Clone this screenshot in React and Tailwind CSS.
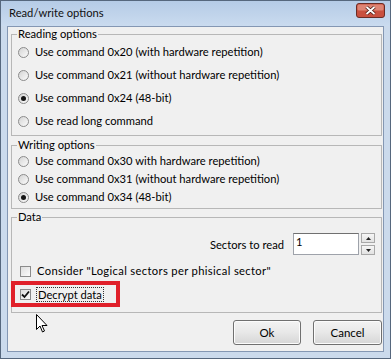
import React from "react";

function Radio({ checked }) {
  return (
    <span className="relative flex items-center justify-center w-[11px] h-[11px] rounded-full border border-[#8b8b8b] bg-linear-to-br from-[#d4d4d4] to-[#fbfbfb] shrink-0">
      {checked && <span className="w-[5px] h-[5px] rounded-full bg-[#151515]" />}
    </span>
  );
}

function Checkbox({ checked }) {
  return (
    <span className="flex items-center justify-center w-[11px] h-[11px] border border-[#8b8b8b] bg-linear-to-br from-[#dedede] to-[#fbfbfb] shrink-0">
      {checked && (
        <svg width="9" height="9" viewBox="0 0 9 9">
          <path d="M1 4.5 L3.5 7 L8 1.5" fill="none" stroke="#111" strokeWidth="1.8" />
        </svg>
      )}
    </span>
  );
}

function Group({ label, className = "", children }) {
  return (
    <fieldset className={`border border-[#b7b7b7] min-w-0 ${className}`}>
      <legend className="ml-[5px] px-[1px] leading-[14px]">{label}</legend>
      {children}
    </fieldset>
  );
}

function Row({ h, checked, children }) {
  return (
    <div className={`flex items-center gap-[6px] pl-[6px] ${h}`}>
      <Radio checked={checked} />
      <span>{children}</span>
    </div>
  );
}

function Button({ children, w }) {
  return (
    <button className={`${w} h-[25px] rounded-[3px] border border-[#707070] bg-linear-to-b from-[#f3f3f3] via-[#e8e8e8] to-[#d6d6d6] shadow-[inset_0_0_0_1px_#fcfcfc] text-[11.5px]`}>
      {children}
    </button>
  );
}

function CloseIcon() {
  return (
    <svg width="29" height="15" viewBox="0 0 29 15" className="mt-[-7px] shrink-0">
      <rect x="0.5" y="0.5" width="28" height="14" rx="2.5" fill="#c9503f" stroke="#6b2c25" />
      <rect x="1.5" y="1.5" width="26" height="6" rx="1.5" fill="#dd8575" />
      <path d="M10.5 4 L18.5 11 M18.5 4 L10.5 11" stroke="#4a1a14" strokeWidth="3.4" />
      <path d="M10.5 4 L18.5 11 M18.5 4 L10.5 11" stroke="#fff" strokeWidth="1.8" />
    </svg>
  );
}

function Spinner() {
  return (
    <div className="w-[14px] h-[22px] flex flex-col justify-between">
      <div className="h-[10px] border border-[#a8a8a8] bg-linear-to-b from-[#f6f6f6] to-[#e2e2e2] flex items-center justify-center">
        <svg width="5" height="3" viewBox="0 0 5 3"><path d="M0 3 L2.5 0 L5 3Z" fill="#222" /></svg>
      </div>
      <div className="h-[10px] border border-[#a8a8a8] bg-linear-to-b from-[#f6f6f6] to-[#e2e2e2] flex items-center justify-center">
        <svg width="5" height="3" viewBox="0 0 5 3"><path d="M0 0 L2.5 3 L5 0Z" fill="#222" /></svg>
      </div>
    </div>
  );
}

export default function App() {
  return (
    <div className="relative w-[391px] h-[359px] flex flex-col bg-[#cbdaec] border border-[#56677d] font-['Lato',sans-serif] text-[11.2px] text-black">
      {/* title bar */}
      <div className="h-[25px] flex items-center justify-between pl-[8px] pr-[5px] bg-linear-to-b from-[#b5cbe6] to-[#cadbef]">
        <span className="text-[11.2px] text-[#111]">Read/write options</span>
        <CloseIcon />
      </div>

      {/* client area */}
      <div className="flex-1 mx-[6px] mb-[6px] bg-[#f0f0f0] border border-[#8497b3] pl-[3px] pr-[1px] flex flex-col">
        <Group label="Reading options">
          <div className="flex flex-col pb-[2px]">
            <Row h="h-[23px]">Use command 0x20 (with hardware repetition)</Row>
            <Row h="h-[23px]">Use command 0x21 (without hardware repetition)</Row>
            <Row h="h-[23px]" checked>Use command 0x24 (48-bit)</Row>
            <Row h="h-[23px]">Use read long command</Row>
          </div>
        </Group>

        <Group label="Writing options" className="mt-[2px]">
          <div className="flex flex-col pb-[2px]">
            <Row h="h-[18px]">Use command 0x30 with hardware repetition)</Row>
            <Row h="h-[18px]">Use command 0x31 (without hardware repetition)</Row>
            <Row h="h-[18px]" checked>Use command 0x34 (48-bit)</Row>
          </div>
        </Group>

        <Group label="Data" className="mt-[1px]">
          <div className="flex flex-col pb-[5px]">
            <div className="mt-[9px] h-[22px] grid grid-cols-[1fr_66px_14px] gap-x-[2px] items-center pr-[6px]">
              <span className="mt-[3px] text-right pr-[7px]">Sectors to read</span>
              <div className="h-[22px] bg-white border border-[#9ea2aa] border-t-[#707070] pl-[2px] leading-[16px]">1</div>
              <Spinner />
            </div>
            <div className="mt-[7px] h-[19px] flex items-center gap-[6px] pl-[8px]">
              <Checkbox />
              <span className="tracking-[0.35px]">Consider "Logical sectors per phisical sector"</span>
            </div>
            <div className="ml-[-1px] w-[109px] h-[26px] border-[4px] border-[#e0202a] flex items-center gap-[5px] pl-[5px]">
              <Checkbox checked />
              <span className="border border-dotted border-[#333] px-[1px] leading-[13px]">Decrypt data</span>
            </div>
          </div>
        </Group>

        <div className="mt-[7px] flex justify-end gap-[12px]">
          <Button w="w-[68px]">Ok</Button>
          <Button w="w-[69px]">Cancel</Button>
        </div>
      </div>

      {/* mouse cursor */}
      <svg className="absolute left-[35px] top-[313px]" width="13" height="19" viewBox="0 0 13 19">
        <path d="M0.5 0.5 L0.5 15.5 L4 12 L6.5 18 L8.5 17 L6 11.5 L11 11.5 Z" fill="#fff" stroke="#000" strokeWidth="1" strokeLinejoin="round" />
      </svg>
    </div>
  );
}
